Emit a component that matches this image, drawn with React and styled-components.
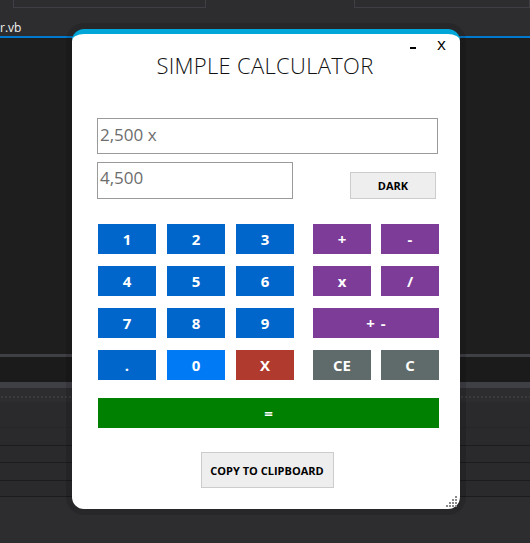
import React from 'react';
import styled, { createGlobalStyle } from 'styled-components';

// --- Colors ---
const IDE_BG = '#2d2d30';
const EDITOR_BG = '#1e1e1e';
const IDE_LINE = '#3f3f46';
const VS_BLUE = '#007acc';
const WINDOW_ACCENT = '#00a6d8';
const KEY_BLUE = '#0066cc';
const KEY_BLUE_LIGHT = '#007bf5';
const KEY_RED = '#b03a2e';
const KEY_PURPLE = '#7d3c98';
const KEY_GRAY = '#5f6a6a';
const KEY_GREEN = '#008000';

const GlobalStyle = createGlobalStyle`
  html, body {
    margin: 0;
    padding: 0;
    background: ${EDITOR_BG};
  }
  * { box-sizing: border-box; }
`;

// --- IDE backdrop ---

const Ide = styled.div`
  position: relative;
  width: 530px;
  height: 543px;
  overflow: hidden;
  display: flex;
  flex-direction: column;
  background: ${IDE_BG};
  font-family: 'Open Sans', 'Liberation Sans', sans-serif;
`;

const Toolbar = styled.div`
  height: 36px;
  display: flex;
  flex-direction: column;
  justify-content: space-between;
`;

const ComboRow = styled.div`
  display: flex;
  height: 8px;
`;

const Combo = styled.div`
  margin-left: ${p => p.$offset}px;
  width: ${p => p.$width}px;
  height: 8px;
  border: 1px solid ${IDE_LINE};
  border-top: none;
`;

const TabLabel = styled.div`
  color: #f1f1f1;
  font-size: 12px;
  line-height: 14px;
  padding-bottom: 1px;
`;

const AccentLine = styled.div`
  height: 2px;
  background: ${VS_BLUE};
`;

const Editor = styled.div`
  height: 316px;
  background: ${EDITOR_BG};
`;

const Splitter = styled.div`
  height: ${p => p.$h}px;
  background: ${p => p.$bg};
`;

const DottedStrip = styled.div`
  height: 14px;
  background-color: ${IDE_BG};
  background-image: radial-gradient(circle, #4a4a50 0.6px, transparent 0.8px);
  background-size: 4px 4px;
  background-position: 0 7px;
  background-repeat: repeat-x;
`;

const PanelRow = styled.div`
  height: ${p => p.$h}px;
  background: #2a2a2c;
  border-bottom: 1px solid ${p => p.$line};
`;

// --- Calculator window ---

const Window = styled.div`
  position: absolute;
  left: 72px;
  top: 29px;
  width: 388px;
  height: 480px;
  background: #ffffff;
  border-top: 5px solid ${WINDOW_ACCENT};
  border-radius: 12px;
  box-shadow: 0 0 0 6px rgba(0, 0, 0, 0.12);
  display: flex;
  flex-direction: column;
  padding: 0 21px 0 25px;
  font-family: 'Open Sans', 'Liberation Sans', sans-serif;
`;

const Controls = styled.div`
  display: flex;
  justify-content: flex-end;
  align-items: flex-start;
  gap: 21px;
  height: 17px;
  margin-right: -7px;
  padding-top: 1px;
`;

const MinimizeGlyph = styled.span`
  width: 6px;
  height: 2px;
  margin-top: 12px;
  background: #000;
`;

const CloseGlyph = styled.span`
  color: #000;
  font-size: 17px;
  font-weight: 400;
  line-height: 1;
`;

const Title = styled.h1`
  margin: 0;
  padding-right: 6px;
  text-align: center;
  font-weight: 300;
  font-size: 22px;
  letter-spacing: 0.3px;
  color: #111;
  line-height: 28px;
`;

const Display = styled.div`
  height: ${p => p.$h}px;
  width: ${p => p.$w}px;
  border: 1px solid #9a9a9a;
  color: #6d6d6d;
  font-size: 17px;
  padding: ${p => p.$pt}px 2px 0;
  line-height: 24px;
`;

const FirstDisplay = styled(Display)`
  margin-top: 39px;
`;

const DisplayRow = styled.div`
  margin-top: 8px;
  display: flex;
  align-items: flex-end;
  justify-content: space-between;
  padding-right: 3px;
`;

const GrayButton = styled.button`
  width: ${p => p.$w}px;
  height: ${p => p.$h}px;
  background: #eeeeee;
  border: 1px solid #cccccc;
  color: #000;
  font-family: inherit;
  font-weight: 700;
  font-size: ${p => p.$size}px;
  padding: 0;
`;

const Keypad = styled.div`
  margin-top: 25px;
  margin-left: 1px;
  display: flex;
  gap: 19px;
`;

const KeyGrid = styled.div`
  display: grid;
  grid-template-columns: repeat(${p => p.$cols}, 58px);
  grid-auto-rows: 30px;
  column-gap: ${p => p.$gap}px;
  row-gap: 12px;
`;

const Key = styled.button`
  background: ${p => p.$bg};
  border: none;
  color: #ffffff;
  font-family: inherit;
  font-weight: 700;
  font-size: 15px;
  word-spacing: 2px;
  padding: 0;
  grid-column: ${p => (p.$span ? `span ${p.$span}` : 'auto')};
`;

const EqualsBar = styled(Key)`
  margin: 18px 0 0 1px;
  height: 30px;
  width: 341px;
`;

const CopyRow = styled.div`
  margin-top: 24px;
  display: flex;
  justify-content: center;
  padding-right: 2px;
`;

const Grip = styled.svg`
  position: absolute;
  right: 2px;
  bottom: 2px;
`;

const numberKeys = [
  { label: '1' }, { label: '2' }, { label: '3' },
  { label: '4' }, { label: '5' }, { label: '6' },
  { label: '7' }, { label: '8' }, { label: '9' },
  { label: '.' }, { label: '0', bg: KEY_BLUE_LIGHT }, { label: 'X', bg: KEY_RED },
];

const opKeys = [
  { label: '+', bg: KEY_PURPLE },
  { label: '-', bg: KEY_PURPLE },
  { label: 'x', bg: KEY_PURPLE },
  { label: '/', bg: KEY_PURPLE },
  { label: '+ -', bg: KEY_PURPLE, span: 2 },
  { label: 'CE', bg: KEY_GRAY },
  { label: 'C', bg: KEY_GRAY },
];

const App = () => (
  <>
    <GlobalStyle />
    <Ide>
      <Toolbar>
        <ComboRow>
          <Combo $offset={13} $width={197} />
          <Combo $offset={148} $width={180} />
        </ComboRow>
        <TabLabel>r.vb</TabLabel>
      </Toolbar>
      <AccentLine />
      <Editor />
      <Splitter $h={3} $bg={IDE_LINE} />
      <Splitter $h={25} $bg="#1b1b1c" />
      <Splitter $h={6} $bg={IDE_LINE} />
      <DottedStrip />
      <PanelRow $h={26} $line="#262628" />
      <PanelRow $h={18} $line="#1c1c1d" />
      <PanelRow $h={17} $line="#1c1c1d" />
      <PanelRow $h={18} $line="#1c1c1d" />
      <PanelRow $h={16} $line="#1c1c1d" />

      <Window>
        <Controls>
          <MinimizeGlyph aria-label="minimize" />
          <CloseGlyph>x</CloseGlyph>
        </Controls>
        <Title>SIMPLE CALCULATOR</Title>

        <FirstDisplay $w={341} $h={36} $pt={4}>2,500 x</FirstDisplay>
        <DisplayRow>
          <Display $w={196} $h={37} $pt={3}>4,500</Display>
          <GrayButton $w={86} $h={27} $size={11}>DARK</GrayButton>
        </DisplayRow>

        <Keypad>
          <KeyGrid $cols={3} $gap={11}>
            {numberKeys.map(k => (
              <Key key={k.label} $bg={k.bg || KEY_BLUE}>{k.label}</Key>
            ))}
          </KeyGrid>
          <KeyGrid $cols={2} $gap={10}>
            {opKeys.map(k => (
              <Key key={k.label} $bg={k.bg} $span={k.span}>{k.label}</Key>
            ))}
          </KeyGrid>
        </Keypad>

        <EqualsBar $bg={KEY_GREEN}>=</EqualsBar>

        <CopyRow>
          <GrayButton $w={133} $h={36} $size={11}>COPY TO CLIPBOARD</GrayButton>
        </CopyRow>

        <Grip width="12" height="12" viewBox="0 0 12 12">
          {[[9, 1], [6, 4], [9, 4], [3, 7], [6, 7], [9, 7], [0, 10], [3, 10], [6, 10], [9, 10]].map(([x, y]) => (
            <rect key={`${x}-${y}`} x={x} y={y} width="2" height="2" fill="#8a8a8a" />
          ))}
        </Grip>
      </Window>
    </Ide>
  </>
);

export default App;
